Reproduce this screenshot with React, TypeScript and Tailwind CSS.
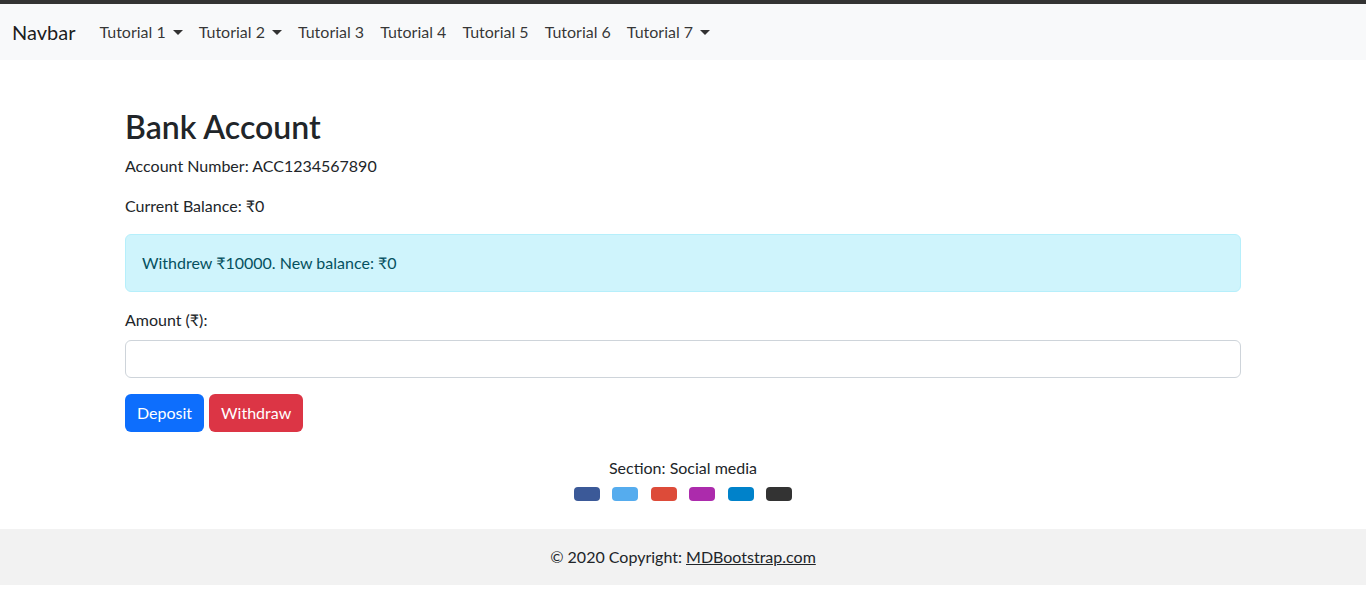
import { ChangeEvent, useState } from "react";

const navItems = [
  { label: "Tutorial 1", dropdown: true },
  { label: "Tutorial 2", dropdown: true },
  { label: "Tutorial 3", dropdown: false },
  { label: "Tutorial 4", dropdown: false },
  { label: "Tutorial 5", dropdown: false },
  { label: "Tutorial 6", dropdown: false },
  { label: "Tutorial 7", dropdown: true },
];

const socials = ["bg-[#3b5998]", "bg-[#55acee]", "bg-[#dd4b39]", "bg-[#ac2bac]", "bg-[#0082ca]", "bg-[#333333]"];

export default function App() {
  const [amount, setAmount] = useState("");

  return (
    <div className="min-h-[599px] bg-white font-['Lato','Noto_Sans',sans-serif] text-base text-[#212529]">
      {/* Navbar */}
      <nav className="border-t-4 border-[#333333] bg-[#f8f9fa]">
        <div className="flex h-14 items-center px-3">
          <a className="mr-4 text-xl text-black/90">Navbar</a>
          <ul className="flex items-center">
            {navItems.map((item) => (
              <li key={item.label} className="flex items-center px-2 py-2 text-black/80">
                {item.label}
                {item.dropdown && (
                  <span className="ml-[7px] inline-block h-0 w-0 border-x-[5px] border-t-[5px] border-x-transparent border-t-black/80" />
                )}
              </li>
            ))}
          </ul>
        </div>
      </nav>

      {/* Bank account */}
      <div className="mx-auto mt-12 w-[1140px] px-3">
        <h2 className="mb-2 text-[32px] font-semibold leading-[1.2]">Bank Account</h2>
        <p className="mb-4 leading-6">Account Number: ACC1234567890</p>
        <p className="mb-4 leading-6">Current Balance: ₹0</p>

        <div className="mb-4 rounded-md border border-[#b6effb] bg-[#cff4fc] p-4 leading-6 text-[#055160]">
          Withdrew ₹10000. New balance: ₹0
        </div>

        <div className="mb-4">
          <label className="mb-2 block leading-6">Amount (₹):</label>
          <input
            type="number"
            value={amount}
            onChange={(e: ChangeEvent<HTMLInputElement>) => setAmount(e.target.value)}
            className="block h-[38px] w-full rounded-md border border-[#ced4da] px-3 outline-none"
          />
        </div>

        <div className="flex gap-[5px]">
          <button className="h-[38px] rounded-md bg-[#0d6efd] px-3 text-white">Deposit</button>
          <button className="h-[38px] rounded-md bg-[#dc3545] px-3 text-white">Withdraw</button>
        </div>
      </div>

      {/* Footer */}
      <footer className="mt-6">
        <div className="flex flex-col items-center pb-7">
          <p className="leading-6">Section: Social media</p>
          <div className="mt-[7px] flex gap-[12.5px]">
            {socials.map((c) => (
              <span key={c} className={`block h-[14px] w-[26px] rounded ${c}`} />
            ))}
          </div>
        </div>
        <div className="bg-[#f2f2f2] py-4 text-center leading-6">
          © 2020 Copyright: <a className="text-[#212529] underline">MDBootstrap.com</a>
        </div>
      </footer>
    </div>
  );
}
